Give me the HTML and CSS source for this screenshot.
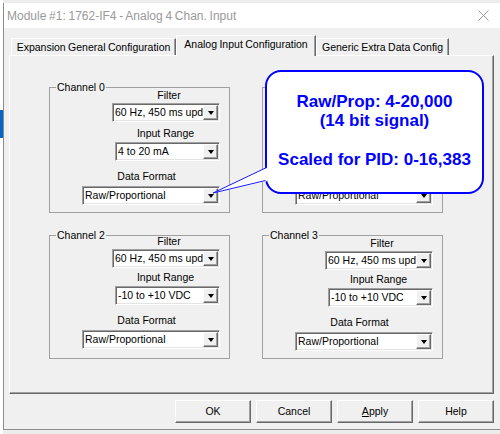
FILE: index.html
```html
<!DOCTYPE html>
<html>
<head>
<meta charset="utf-8">
<link rel="stylesheet" href="styles.css">
</head>
<body>
<div class="dialog">
  <div class="titlebar">
    <span class="title">Module #1: 1762-IF4 - Analog 4 Chan. Input</span>
    <svg class="close" width="11" height="11" viewBox="0 0 11 11"><path d="M0.5 0.5 L10.5 10.5 M10.5 0.5 L0.5 10.5" stroke="#999" stroke-width="1" fill="none"/></svg>
  </div>
  <div class="client">
    <div class="tabs">
      <div class="tab t1">Expansion General Configuration</div>
      <div class="tab t2 active">Analog Input Configuration</div>
      <div class="tab t3">Generic Extra Data Config</div>
    </div>
    <div class="panel">
      <div class="groups">
        <div class="group g-top">
          <span class="legend">Channel 0</span>
          <div class="field f-filter"><div class="lbl">Filter</div><div class="combo"><span class="val">60 Hz, 450 ms update</span><span class="drop"></span></div></div>
          <div class="field f-range"><div class="lbl">Input Range</div><div class="combo"><span class="val">4 to 20 mA</span><span class="drop"></span></div></div>
          <div class="field f-format"><div class="lbl">Data Format</div><div class="combo"><span class="val">Raw/Proportional</span><span class="drop"></span></div></div>
        </div>
        <div class="group g-top">
          <span class="legend">Channel 1</span>
          <div class="field f-filter"><div class="lbl">Filter</div><div class="combo"><span class="val">60 Hz, 450 ms update</span><span class="drop"></span></div></div>
          <div class="field f-range"><div class="lbl">Input Range</div><div class="combo"><span class="val">4 to 20 mA</span><span class="drop"></span></div></div>
          <div class="field f-format"><div class="lbl">Data Format</div><div class="combo"><span class="val">Raw/Proportional</span><span class="drop"></span></div></div>
        </div>
        <div class="group g-bot g-high">
          <span class="legend">Channel 2</span>
          <div class="field f-filter"><div class="lbl">Filter</div><div class="combo"><span class="val">60 Hz, 450 ms update</span><span class="drop"></span></div></div>
          <div class="field f-range"><div class="lbl">Input Range</div><div class="combo"><span class="val">-10 to +10 VDC</span><span class="drop"></span></div></div>
          <div class="field f-format"><div class="lbl">Data Format</div><div class="combo"><span class="val">Raw/Proportional</span><span class="drop"></span></div></div>
        </div>
        <div class="group g-bot">
          <span class="legend">Channel 3</span>
          <div class="field f-filter"><div class="lbl">Filter</div><div class="combo"><span class="val">60 Hz, 450 ms update</span><span class="drop"></span></div></div>
          <div class="field f-range"><div class="lbl">Input Range</div><div class="combo"><span class="val">-10 to +10 VDC</span><span class="drop"></span></div></div>
          <div class="field f-format"><div class="lbl">Data Format</div><div class="combo"><span class="val">Raw/Proportional</span><span class="drop"></span></div></div>
        </div>
      </div>
      <div class="callout">
        <div class="line">Raw/Prop: 4-20,000</div>
        <div class="line">(14 bit signal)</div>
        <div class="line gap">Scaled for PID: 0-16,383</div>
      </div>
      <svg class="tail" width="270" height="150" viewBox="0 0 270 150">
        <polygon points="257.5,111.5 203,137 257.5,125" fill="#fff"/>
        <path d="M255.5 112 L203 137 M255.5 124.5 L203 137" stroke="#1a1aff" stroke-width="1" fill="none"/>
      </svg>
    </div>
    <div class="buttons">
      <div class="btn">OK</div>
      <div class="btn">Cancel</div>
      <div class="btn"><u>A</u>pply</div>
      <div class="btn">Help</div>
    </div>
  </div>
</div>
</body>
</html>
```

FILE: styles.css
```css
html, body {
  margin: 0;
  padding: 0;
}
body {
  width: 500px;
  height: 434px;
  overflow: hidden;
  font-family: "Liberation Sans", Arial, sans-serif;
  font-size: 10.5px;
  color: #000;
  background:
    linear-gradient(#0a64c8, #0a64c8) 0 110px / 3px 28px no-repeat,
    linear-gradient(#ffffff, #ffffff) 0 0 / 3px 100% no-repeat,
    #ececec;
}
.dialog {
  margin: 3px 0 0 3px;
  width: 500px;
  height: 427px;
  box-sizing: border-box;
  border-left: 1px solid #8c8c8c;
  border-bottom: 1px solid #8c8c8c;
  background: #f0f0f0;
}
.titlebar {
  height: 25px;
  background: #fff;
  display: flex;
  align-items: center;
  padding-left: 3px;
}
.title {
  font-size: 12px;
  word-spacing: -0.6px;
  color: #999;
}
.close {
  margin-left: auto;
  margin-right: 14px;
  display: block;
}
.client {
  padding: 7px 0 0 5px;
}
.tabs {
  display: flex;
  align-items: flex-end;
  height: 20px;
  margin-left: 2px;
}
.tab {
  height: 17px;
  box-sizing: border-box;
  border-top: 1px solid #fff;
  border-left: 1px solid #fff;
  border-right: 1px solid #696969;
  box-shadow: inset -1px 0 #a0a0a0;
  text-align: center;
  line-height: 16px;
  white-space: nowrap;
  word-spacing: -0.5px;
}
.t1 { width: 165px; }
.t2 { width: 140px; }
.t3 { width: 133px; }
.tab.active {
  height: 21px;
  margin-bottom: -1px;
  position: relative;
  z-index: 1;
  background: #f0f0f0;
}
.panel {
  position: relative;
  width: 485px;
  height: 339px;
  box-sizing: border-box;
  border: 1px solid;
  border-color: #fff #696969 #696969 #fff;
  box-shadow: inset -1px -1px #a0a0a0;
  padding: 31px 0 0 39px;
}
.groups {
  display: grid;
  grid-template-columns: 181px 181px;
  grid-template-rows: 126px 124px;
  column-gap: 32px;
  row-gap: 22px;
}
.group {
  position: relative;
  box-sizing: border-box;
  border: 1px solid #a0a0a0;
  padding-right: 9px;
  display: flex;
  flex-direction: column;
  align-items: flex-end;
}
.legend {
  position: absolute;
  left: 6px;
  top: -7px;
  padding: 0 1px;
  background: #f0f0f0;
  line-height: 13px;
}
.field {
  display: flex;
  flex-direction: column;
}
.lbl {
  line-height: 12px;
  text-align: center;
  white-space: nowrap;
}
.combo {
  display: flex;
  height: 19px;
  box-sizing: border-box;
  border: 1px solid;
  border-color: #a0a0a0 #fff #fff #a0a0a0;
  box-shadow: inset 1px 1px #696969, inset -1px -1px #e3e3e3;
  padding: 1px;
  background: #fff;
}
.val {
  flex: 1;
  overflow: hidden;
  white-space: nowrap;
  line-height: 15px;
  padding-left: 1px;
}
.drop {
  width: 15px;
  height: 15px;
  box-sizing: border-box;
  flex: none;
  border: 1px solid;
  border-color: #fff #696969 #696969 #fff;
  box-shadow: inset -1px -1px #a0a0a0;
  background: #f0f0f0;
  display: flex;
  align-items: center;
  justify-content: center;
}
.drop::after {
  content: "";
  width: 0;
  height: 0;
  border-style: solid;
  border-width: 4px 3.5px 0;
  border-color: #000 transparent transparent;
  margin-top: 1px;
}
.f-filter { margin-top: 1px; }
.f-filter .combo { width: 108px; margin-top: 2px; }
.f-filter .lbl { padding-left: 6px; }
.f-range { margin-top: 5px; }
.f-range .combo { width: 105px; margin-top: 3px; }
.f-range .lbl { padding-right: 4px; }
.f-format { margin-top: 9px; }
.f-format .combo { width: 138px; margin-top: 4px; }
.f-format .lbl { padding-right: 9px; }
.g-bot .f-range { margin-top: 3px; }
.g-high .f-filter { margin-top: -1px; }

.callout {
  position: absolute;
  left: 255px;
  top: 14px;
  width: 219px;
  height: 124px;
  box-sizing: border-box;
  border: 2px solid #0000ff;
  border-radius: 16px;
  background: #fff;
  color: #0000ff;
  font-weight: bold;
  font-size: 17px;
  line-height: 19.3px;
  text-align: center;
  padding-top: 20px;
  white-space: nowrap;
}
.callout .gap {
  margin-top: 19.3px;
}
.tail {
  position: absolute;
  left: 0;
  top: 0;
  display: block;
}
.buttons {
  width: 485px;
  margin-top: 6px;
  display: flex;
  justify-content: flex-end;
  gap: 5px;
}
.btn {
  width: 76px;
  height: 23px;
  box-sizing: border-box;
  border: 1px solid;
  border-color: #fff #696969 #696969 #fff;
  box-shadow: inset -1px -1px #a0a0a0;
  text-align: center;
  line-height: 21px;
}
```
